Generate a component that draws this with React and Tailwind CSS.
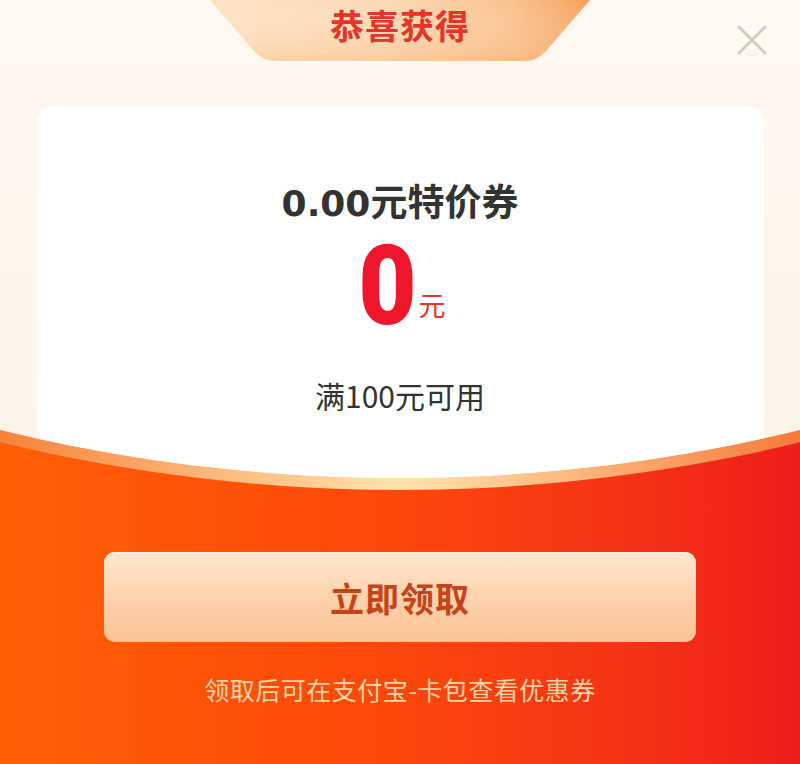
export default function App() {
  const cjk = { fontFamily: '"Noto Sans CJK SC", "Noto Sans", sans-serif' };
  return (
    <div
      className="relative w-[800px] h-[764px] overflow-hidden bg-gradient-to-r from-[#ff5e05] via-[#fd470b] to-[#ee1c1a]"
      style={cjk}
    >
      {/* top cream section with curved bottom and gold rim */}
      <div className="h-[490px] w-full bg-gradient-to-r from-[#f5823a] via-[#ffe3ad] to-[#f47a38] [clip-path:circle(1703px_at_400px_-1213px)]">
        <div className="h-full w-full bg-gradient-to-b from-[#fef8f1] to-[#fdf3e8] [clip-path:circle(1691px_at_400px_-1213px)] flex flex-col items-center">
          {/* header tab */}
          <div className="relative w-[380px] h-[64px] shrink-0 flex items-start justify-center">
            <svg
              className="absolute inset-0"
              width="380"
              height="64"
              viewBox="0 0 380 64"
            >
              <defs>
                <linearGradient id="tabg" x1="0" y1="0" x2="1" y2="0">
                  <stop offset="0" stopColor="#fde3c4" />
                  <stop offset="0.45" stopColor="#fcd9b5" />
                  <stop offset="0.8" stopColor="#fac18c" />
                  <stop offset="1" stopColor="#f6a05a" />
                </linearGradient>
                <linearGradient id="tabv" x1="0" y1="0" x2="0" y2="1">
                  <stop offset="0" stopColor="#ffffff" stopOpacity="0" />
                  <stop offset="1" stopColor="#f7b57a" stopOpacity="0.35" />
                </linearGradient>
              </defs>
              <path
                d="M0 0 H380 L336 51 Q327 61 314 61 H66 Q53 61 44 51 Z"
                fill="url(#tabg)"
              />
              <path
                d="M0 0 H380 L336 51 Q327 61 314 61 H66 Q53 61 44 51 Z"
                fill="url(#tabv)"
              />
            </svg>
            <span className="relative mt-[5px] text-[34px] leading-[40px] font-bold text-[#e5352b] tracking-[1px]">
              恭喜获得
            </span>
          </div>
          {/* white card */}
          <div className="mt-[43px] w-[727px] flex-1 bg-white rounded-t-[14px] flex flex-col items-center">
            <div className="mt-[71px] flex items-baseline text-[#333333] font-bold leading-[44px]">
              <span
                className="text-[36px]"
                style={{ fontFamily: '"DejaVu Sans", sans-serif' }}
              >
                0.00
              </span>
              <span className="text-[37px]">元特价券</span>
            </div>
            <div className="mt-[4px] flex items-end">
              <span
                className="text-[112px] leading-[112px] font-black text-[#f0172d] scale-x-[0.9]"
                style={{ fontFamily: 'Roboto, "Liberation Sans", sans-serif' }}
              >
                0
              </span>
              <span className="ml-[-1px] mb-[22px] text-[27px] leading-[30px] text-[#e5362c]">
                元
              </span>
            </div>
            <div className="mt-[35px] text-[30px] leading-[36px] text-[#333333]">
              满100元可用
            </div>
          </div>
        </div>
      </div>

      {/* bottom section */}
      <div className="flex flex-col items-center pt-[62px]">
        <button className="w-[592px] h-[90px] rounded-[11px] bg-gradient-to-b from-[#fee6cf] via-[#fdd2ad] to-[#fbc394] flex items-center justify-center shadow-[inset_0_1px_0_rgba(255,255,255,0.6)]">
          <span className="text-[34px] font-bold text-[#c7431a] tracking-[1px]">
            立即领取
          </span>
        </button>
        <div className="mt-[31px] text-[25px] leading-[32px] tracking-[0.5px] text-[#fdd4a6]">
          领取后可在支付宝-卡包查看优惠券
        </div>
      </div>

      {/* close button */}
      <button className="absolute top-[25px] right-[33px] w-[30px] h-[30px]">
        <svg width="30" height="30" viewBox="0 0 30 30">
          <path
            d="M2 2 L28 28 M28 2 L2 28"
            stroke="#d7cbc0"
            strokeWidth="3"
            strokeLinecap="round"
          />
        </svg>
      </button>
    </div>
  );
}
